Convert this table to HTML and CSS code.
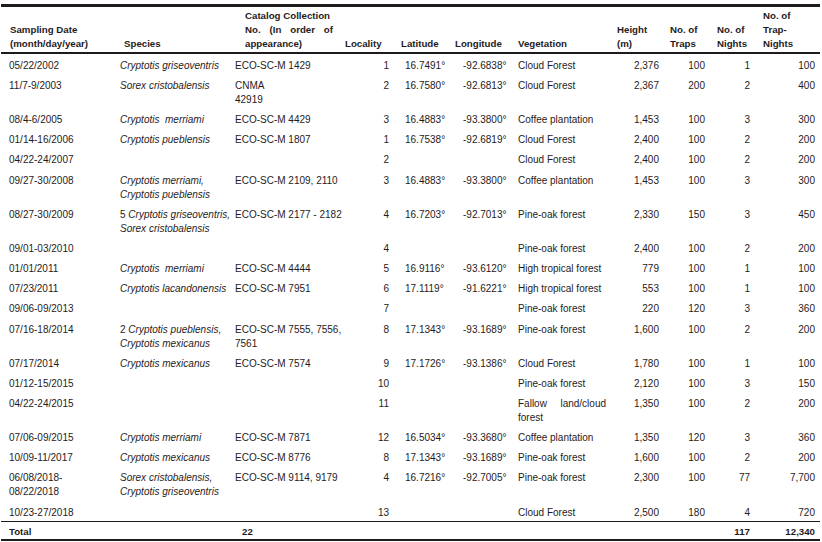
FILE: index.html
```html
<!DOCTYPE html>
<html>
<head>
<meta charset="utf-8">
<link rel="stylesheet" href="styles.css">
</head>
<body>
<table class="data">
<colgroup>
<col class="w1"><col class="w2"><col class="w3"><col class="w4"><col class="w5"><col class="w6"><col class="w7"><col class="w8"><col class="w9"><col class="w10"><col class="w11">
</colgroup>
<thead>
<tr>
<th>Sampling Date<br>(month/day/year)</th>
<th>Species</th>
<th>Catalog Collection<span class="jl">No. (In order of</span>appearance)</th>
<th>Locality</th>
<th>Latitude</th>
<th>Longitude</th>
<th>Vegetation</th>
<th>Height<br>(m)</th>
<th>No. of<br>Traps</th>
<th>No. of<br>Nights</th>
<th>No. of<br>Trap-<br>Nights</th>
</tr>
</thead>
<tbody>
<tr><td>05/22/2002</td><td><i>Cryptotis griseoventris</i></td><td>ECO-SC-M 1429</td><td>1</td><td>16.7491°</td><td>-92.6838°</td><td>Cloud Forest</td><td>2,376</td><td>100</td><td>1</td><td>100</td></tr>
<tr><td>11/7-9/2003</td><td><i>Sorex cristobalensis</i></td><td>CNMA<br>42919</td><td>2</td><td>16.7580°</td><td>-92.6813°</td><td>Cloud Forest</td><td>2,367</td><td>200</td><td>2</td><td>400</td></tr>
<tr><td>08/4-6/2005</td><td><i>Cryptotis&nbsp; merriami</i></td><td>ECO-SC-M 4429</td><td>3</td><td>16.4883°</td><td>-93.3800°</td><td>Coffee plantation</td><td>1,453</td><td>100</td><td>3</td><td>300</td></tr>
<tr><td>01/14-16/2006</td><td><i>Cryptotis pueblensis</i></td><td>ECO-SC-M 1807</td><td>1</td><td>16.7538°</td><td>-92.6819°</td><td>Cloud Forest</td><td>2,400</td><td>100</td><td>2</td><td>200</td></tr>
<tr><td>04/22-24/2007</td><td></td><td></td><td>2</td><td></td><td></td><td>Cloud Forest</td><td>2,400</td><td>100</td><td>2</td><td>200</td></tr>
<tr><td>09/27-30/2008</td><td><i>Cryptotis merriami,<br>Cryptotis pueblensis</i></td><td>ECO-SC-M 2109, 2110</td><td>3</td><td>16.4883°</td><td>-93.3800°</td><td>Coffee plantation</td><td>1,453</td><td>100</td><td>3</td><td>300</td></tr>
<tr><td>08/27-30/2009</td><td>5 <i>Cryptotis griseoventris,<br>Sorex cristobalensis</i></td><td>ECO-SC-M 2177 - 2182</td><td>4</td><td>16.7203°</td><td>-92.7013°</td><td>Pine-oak forest</td><td>2,330</td><td>150</td><td>3</td><td>450</td></tr>
<tr><td>09/01-03/2010</td><td></td><td></td><td>4</td><td></td><td></td><td>Pine-oak forest</td><td>2,400</td><td>100</td><td>2</td><td>200</td></tr>
<tr><td>01/01/2011</td><td><i>Cryptotis&nbsp; merriami</i></td><td>ECO-SC-M 4444</td><td>5</td><td>16.9116°</td><td>-93.6120°</td><td>High tropical forest</td><td>779</td><td>100</td><td>1</td><td>100</td></tr>
<tr><td>07/23/2011</td><td><i>Cryptotis lacandonensis</i></td><td>ECO-SC-M 7951</td><td>6</td><td>17.1119°</td><td>-91.6221°</td><td>High tropical forest</td><td>553</td><td>100</td><td>1</td><td>100</td></tr>
<tr><td>09/06-09/2013</td><td></td><td></td><td>7</td><td></td><td></td><td>Pine-oak forest</td><td>220</td><td>120</td><td>3</td><td>360</td></tr>
<tr><td>07/16-18/2014</td><td>2 <i>Cryptotis pueblensis,<br>Cryptotis mexicanus</i></td><td><span class="jl">ECO-SC-M 7555, 7556,</span>7561</td><td>8</td><td>17.1343°</td><td>-93.1689°</td><td>Pine-oak forest</td><td>1,600</td><td>100</td><td>2</td><td>200</td></tr>
<tr><td>07/17/2014</td><td><i>Cryptotis mexicanus</i></td><td>ECO-SC-M 7574</td><td>9</td><td>17.1726°</td><td>-93.1386°</td><td>Cloud Forest</td><td>1,780</td><td>100</td><td>1</td><td>100</td></tr>
<tr><td>01/12-15/2015</td><td></td><td></td><td>10</td><td></td><td></td><td>Pine-oak forest</td><td>2,120</td><td>100</td><td>3</td><td>150</td></tr>
<tr><td>04/22-24/2015</td><td></td><td></td><td>11</td><td></td><td></td><td><span class="jl">Fallow land/cloud</span>forest</td><td>1,350</td><td>100</td><td>2</td><td>200</td></tr>
<tr><td>07/06-09/2015</td><td><i>Cryptotis merriami</i></td><td>ECO-SC-M 7871</td><td>12</td><td>16.5034°</td><td>-93.3680°</td><td>Coffee plantation</td><td>1,350</td><td>120</td><td>3</td><td>360</td></tr>
<tr><td>10/09-11/2017</td><td><i>Cryptotis mexicanus</i></td><td>ECO-SC-M 8776</td><td>8</td><td>17.1343°</td><td>-93.1689°</td><td>Pine-oak forest</td><td>1,600</td><td>100</td><td>2</td><td>200</td></tr>
<tr><td>06/08/2018-<br>08/22/2018</td><td><i>Sorex cristobalensis,<br>Cryptotis griseoventris</i></td><td>ECO-SC-M 9114, 9179</td><td>4</td><td>16.7216°</td><td>-92.7005°</td><td>Pine-oak forest</td><td>2,300</td><td>100</td><td>77</td><td>7,700</td></tr>
<tr><td>10/23-27/2018</td><td></td><td></td><td>13</td><td></td><td></td><td>Cloud Forest</td><td>2,500</td><td>180</td><td>4</td><td>720</td></tr>
</tbody>
<tfoot>
<tr class="total"><td>Total</td><td></td><td class="sum">22</td><td></td><td></td><td></td><td></td><td></td><td></td><td>117</td><td>12,340</td></tr>
</tfoot>
</table>
</body>
</html>
```

FILE: styles.css
```css
html, body {
  margin: 0;
  padding: 0;
  background: #ffffff;
}

body {
  font-family: "Liberation Sans", Arial, sans-serif;
  font-size: 10px;
  line-height: 14px;
  color: #1f1b1c;
}

.data {
  margin: 4px 0 0 1px;
  width: 819px;
  table-layout: fixed;
  border-collapse: separate;
  border-spacing: 0;
}

.w1 { width: 117px; }
.w2 { width: 114px; }
.w3 { width: 113px; }
.w4 { width: 50px; }
.w5 { width: 57px; }
.w6 { width: 60px; }
.w7 { width: 100px; }
.w8 { width: 52px; }
.w9 { width: 48px; }
.w10 { width: 46px; }
.w11 { width: 62px; }

.data th {
  font-size: 9.7px;
  font-weight: bold;
  text-align: left;
  vertical-align: bottom;
  padding: 2px 0 1px 0;
  border-top: 3px solid #1f1b1c;
  border-bottom: 2px solid #1f1b1c;
  white-space: nowrap;
}

.data td {
  vertical-align: top;
  padding: 4.8px 0 1.37px 0;
  white-space: nowrap;
}

.data i {
  font-style: italic;
}

.jl {
  display: block;
  text-align: justify;
  text-align-last: justify;
}

/* header offsets */
.data th:nth-child(1) { padding-left: 9px; }
.data th:nth-child(2) { padding-left: 6px; }
.data th:nth-child(3) { padding-left: 13px; padding-right: 12px; }
.data th:nth-child(4) { padding-left: 0; }
.data th:nth-child(5) { padding-left: 6px; }
.data th:nth-child(6) { padding-left: 3px; }
.data th:nth-child(7) { padding-left: 6px; }
.data th:nth-child(8) { padding-left: 5px; }
.data th:nth-child(9) { padding-left: 6px; }
.data th:nth-child(10) { padding-left: 5px; }
.data th:nth-child(11) { padding-left: 5px; }

/* body offsets */
.data td:nth-child(1) { padding-left: 8px; }
.data td:nth-child(2) { padding-left: 2px; }
.data td:nth-child(3) { padding-left: 3px; padding-right: 5px; }
.data td:nth-child(4) { text-align: right; padding-right: 6px; }
.data td:nth-child(5) { padding-left: 10px; }
.data td:nth-child(6) { padding-left: 11px; }
.data td:nth-child(7) { padding-left: 6px; padding-right: 6px; white-space: normal; }
.data td:nth-child(8) { text-align: right; padding-right: 5px; }
.data td:nth-child(9) { text-align: right; padding-right: 7px; }
.data td:nth-child(10) { text-align: right; padding-right: 8px; }
.data td:nth-child(11) { text-align: right; padding-right: 5px; }

.total td {
  font-size: 9.7px;
  font-weight: bold;
  padding-top: 3.5px;
  padding-bottom: 0;
  border-top: 1px solid #1f1b1c;
  border-bottom: 2.5px solid #1f1b1c;
}

.total td.sum {
  padding-left: 10px;
}
```
